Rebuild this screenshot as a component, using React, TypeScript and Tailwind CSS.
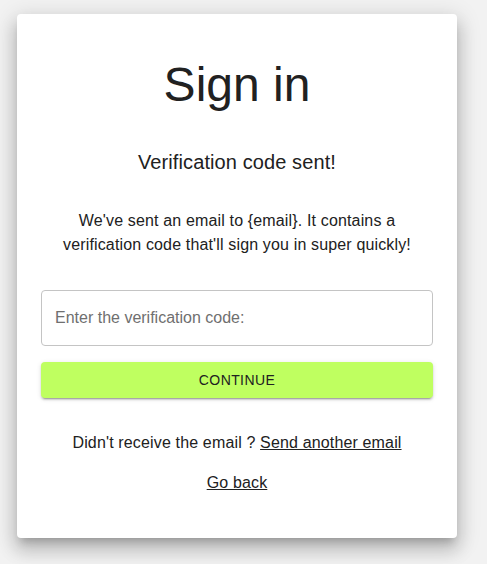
export default function App() {
  return (
    <div className="min-h-[564px] bg-[#f2f2f2] pt-[14px] pl-[17px] font-['Liberation_Sans',Arial,sans-serif] text-[#212121]">
      <div className="w-[440px] rounded bg-white px-6 pt-[43px] pb-[43px] text-center shadow-[0_7px_8px_-4px_rgba(0,0,0,0.2),0_12px_17px_2px_rgba(0,0,0,0.14),0_5px_22px_4px_rgba(0,0,0,0.12)]">
        <h1 className="text-[48px] leading-[56px] font-normal">Sign in</h1>
        <h2 className="mt-[35px] text-[20px] leading-[28px] font-normal tracking-[0.1px]">Verification code sent!</h2>
        <p className="mx-auto mt-[33px] w-[360px] text-base leading-6 tracking-[0.15px]">
          We've sent an email to {'{email}'}. It contains a verification code that'll sign you in super quickly!
        </p>

        <input
          type="text"
          placeholder="Enter the verification code:"
          className="mt-[33px] block h-[56px] w-full rounded border border-[#c4c4c4] px-[13px] text-base text-[#212121] outline-none placeholder:text-[#6f6f6f]"
        />

        <button className="mt-4 block h-9 w-full rounded bg-[#bfff60] text-sm tracking-[0.4px] text-[#212121] uppercase shadow-[0_3px_1px_-2px_rgba(0,0,0,0.2),0_2px_2px_0_rgba(0,0,0,0.14),0_1px_5px_0_rgba(0,0,0,0.12)]">
          Continue
        </button>

        <p className="mt-[33px] text-base leading-6 tracking-[0.15px]">
          Didn't receive the email ? <a href="#" className="underline">Send another email</a>
        </p>
        <p className="mt-4 text-base leading-6 tracking-[0.15px]">
          <a href="#" className="underline">Go back</a>
        </p>
      </div>
    </div>
  )
}
